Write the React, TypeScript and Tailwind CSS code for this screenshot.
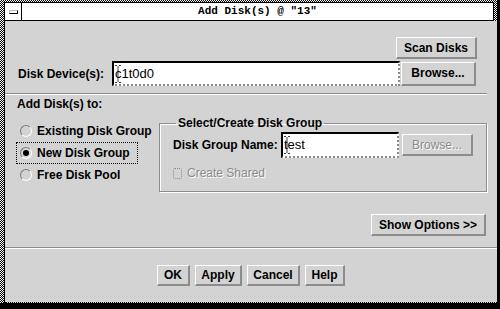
import React from 'react';

const sans = "font-['Liberation_Sans',Arial,sans-serif]";
const btn =
  "flex items-center justify-center bg-[#d3d3d3] border-t border-l border-t-white border-l-white border-b-2 border-r-2 border-b-[#8c8c8c] border-r-[#8c8c8c] text-[12px]";

function IBeam() {
  return (
    <svg
      width="6"
      height="18"
      viewBox="0 0 6 18"
      className="absolute left-[1px] top-[2px]"
    >
      <path d="M0 0.5h2M4 0.5h2M3 1v16M0 17.5h2M4 17.5h2" stroke="#000" strokeWidth="1" opacity="0.75" />
    </svg>
  );
}

function Radio({ checked }: { checked?: boolean }) {
  return (
    <span className="relative w-[12px] h-[12px] shrink-0 rounded-full border border-t-[#7a7a7a] border-l-[#7a7a7a] border-b-white border-r-white bg-[#d3d3d3] flex items-center justify-center">
      {checked && <span className="w-[6px] h-[6px] rounded-full bg-black" />}
    </span>
  );
}

function RadioRow({ label, checked, focused }: { label: string; checked?: boolean; focused?: boolean }) {
  return (
    <div
      className={
        'h-[22px] inline-flex items-center gap-[5px] pl-[3px] pr-[7px] border border-dotted self-start whitespace-nowrap ' +
        (focused ? 'border-black' : 'border-transparent')
      }
    >
      <Radio checked={checked} />
      <span className="text-[12px] font-bold">{label}</span>
    </div>
  );
}

function Separator({ className = '' }: { className?: string }) {
  return <div className={'h-[2px] border-t border-t-[#8c8c8c] border-b border-b-white ' + className} />;
}

export default function App() {
  return (
    <div className={'w-[500px] h-[309px] bg-black overflow-hidden ' + sans}>
      <div className="w-[497px] h-[303px] flex flex-col pl-[4px] pt-[2px] bg-[repeating-conic-gradient(#000_0_25%,#fff_0_50%)] bg-[length:2px_2px]">
        <div className="flex-1 flex flex-col border-l border-black">
          {/* Title bar */}
          <div className="h-[19px] flex bg-white border-t border-b border-black mr-[3px] border-r">
            <div className="w-[17px] flex items-center justify-center border-r border-black">
              <div className="w-[9px] h-[4px] border border-t-[#bbb] border-l-[#bbb] border-b-black border-r-black bg-white" />
            </div>
            <div className="flex-1 flex items-center justify-center font-['Liberation_Mono',monospace] font-bold text-[11px] text-black">
              Add Disk(s) @ "13"
            </div>
          </div>

          {/* Body */}
          <div className="flex-1 flex flex-col bg-[#d3d3d3] border-b border-dotted border-b-black text-black">
            <div className="flex justify-end mt-[16px] mr-[20px]">
              <button className={btn + ' w-[81px] h-[22px] font-bold text-black'}>Scan Disks</button>
            </div>

            <div className="flex items-center mt-[2px] ml-[13px]">
              <span className="w-[94px] text-[12px] font-bold">Disk Device(s):</span>
              <div className="relative w-[288px] h-[25px] bg-white border-2 border-t-black border-l-black border-r-[#888] border-b-[#888] [border-style:solid_dotted_dotted_solid] flex items-center pl-[1px]">
                <IBeam />
                <span className="text-[13px]">c1t0d0</span>
              </div>
              <button className={btn + ' ml-[1px] w-[75px] h-[24px] font-bold text-black'}>Browse...</button>
            </div>

            <Separator className="mt-[7px] mr-[10px]" />

            <div className="mt-[2px] ml-[12px] h-[14px] flex items-center text-[12px] font-bold">
              Add Disk(s) to:
            </div>

            <div className="flex items-start">
              <div className="w-[143px] shrink-0 ml-[11px] mt-[9px] flex flex-col">
                <RadioRow label="Existing Disk Group" />
                <RadioRow label="New Disk Group" checked focused />
                <RadioRow label="Free Disk Pool" />
              </div>

              <fieldset className="w-[325px] mt-[5px] h-[76px] border border-[#8c8c8c] shadow-[inset_1px_1px_0_#fff,1px_1px_0_#fff] px-[13px]">
                <legend className="ml-[3px] px-[2px] text-[12px] font-bold leading-[14px]">
                  Select/Create Disk Group
                </legend>
                <div className="flex items-center mt-[2px]">
                  <span className="w-[108px] text-[12px] font-bold">Disk Group Name:</span>
                  <div className="relative w-[118px] h-[26px] bg-white border-2 border-t-black border-l-black border-r-[#888] border-b-[#888] [border-style:solid_dotted_dotted_solid] flex items-center pl-[1px]">
                    <IBeam />
                    <span className="text-[13px]">test</span>
                  </div>
                  <button className={btn + ' ml-[3px] w-[71px] h-[22px] font-normal text-[#8a8a8a] [text-shadow:1px_1px_0_#fff]'}>
                    Browse...
                  </button>
                </div>
                <div className="flex items-center mt-[6px] gap-[5px]">
                  <span className="w-[9px] h-[11px] border border-dotted border-[#8a8a8a] rounded-[2px]" />
                  <span className="text-[12px] text-[#8a8a8a] [text-shadow:1px_1px_0_#fff]">Create Shared</span>
                </div>
              </fieldset>
            </div>

            <div className="flex justify-end mt-[22px] mr-[11px]">
              <button className={btn + ' w-[115px] h-[22px] font-bold text-black'}>Show Options &gt;&gt;</button>
            </div>

            <Separator className="mt-[11px]" />

            <div className="flex justify-center gap-[5px] mt-[16px]">
              <button className={btn + ' w-[33px] h-[21px] font-bold text-black'}>OK</button>
              <button className={btn + ' w-[47px] h-[21px] font-bold text-black'}>Apply</button>
              <button className={btn + ' w-[53px] h-[21px] font-bold text-black'}>Cancel</button>
              <button className={btn + ' w-[40px] h-[21px] font-bold text-black'}>Help</button>
            </div>
          </div>
        </div>
      </div>
    </div>
  );
}
